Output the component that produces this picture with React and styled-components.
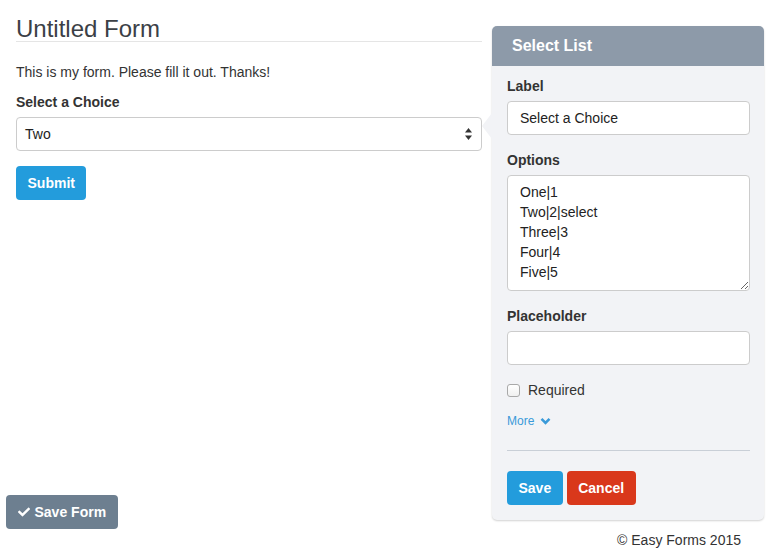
import React from 'react';
import styled, { createGlobalStyle } from 'styled-components';
import { FaCheck } from 'react-icons/fa';

const GlobalStyle = createGlobalStyle`
    body {
        margin: 0;
        background: #fff;
        font-family: "Liberation Sans", Arial, sans-serif;
        font-size: 14px;
        line-height: 20px;
        color: #333;
    }
`;

const Page = styled.div`
    display: flex;
    align-items: flex-start;
    gap: 10px;
    padding: 0 14px 0 16px;
`;

const Left = styled.div`
    width: 466px;
    flex-shrink: 0;
`;

const Title = styled.h1`
    margin: 16px 0 0;
    font-size: 24px;
    font-weight: 400;
    line-height: 25px;
    color: #3b4046;
    border-bottom: 1px solid #e5e5e5;
`;

const Intro = styled.p`
    margin: 20px 0 0;
`;

const FieldLabel = styled.div`
    margin-top: ${props => props.first ? '10px' : '15px'};
    margin-bottom: 5px;
    font-weight: 700;
`;

const SelectBox = styled.div`
    height: 34px;
    box-sizing: border-box;
    border: 1px solid #ccc;
    border-radius: 4px;
    background: #fff;
    display: flex;
    align-items: center;
    justify-content: space-between;
    padding: 0 8px 0 8px;
    color: #222;
`;

const Button = styled.button`
    height: 34px;
    padding: 0 11.5px;
    border: none;
    border-radius: 4px;
    font-family: inherit;
    font-size: 14px;
    font-weight: 700;
    color: #fff;
    background: ${props => props.variant === 'danger' ? '#d9381b' : props.variant === 'muted' ? '#6d7f90' : '#239cdc'};
    display: inline-flex;
    align-items: center;
    gap: 5px;
`;

const SubmitRow = styled.div`
    margin-top: 15px;
`;

const Side = styled.div`
    width: 272px;
    flex-shrink: 0;
    margin-top: 26px;
`;

const Panel = styled.div`
    position: relative;
    background: #f2f3f6;
    border-radius: 5px;
    box-shadow: 0 1px 2px rgba(0, 0, 0, 0.18);
`;

const Pointer = styled.div`
    position: absolute;
    left: -10px;
    top: 87px;
    width: 0;
    height: 0;
    border-top: 13px solid transparent;
    border-bottom: 13px solid transparent;
    border-right: 10px solid #f2f3f6;
`;

const PanelHeader = styled.div`
    height: 40px;
    background: #8d9aa9;
    border-radius: 5px 5px 0 0;
    color: #fff;
    font-size: 16px;
    font-weight: 700;
    display: flex;
    align-items: center;
    padding-left: 20px;
`;

const PanelBody = styled.div`
    padding: 0 14px 15px 15px;
`;

const Input = styled.div`
    height: 34px;
    box-sizing: border-box;
    border: 1px solid #ccc;
    border-radius: 4px;
    background: #fff;
    padding: 0 12px;
    display: flex;
    align-items: center;
    color: #222;
`;

const TextArea = styled.textarea`
    display: block;
    width: 100%;
    height: 116px;
    box-sizing: border-box;
    border: 1px solid #ccc;
    border-radius: 4px;
    background: #fff;
    padding: 6px 12px;
    font-family: inherit;
    font-size: 14px;
    line-height: 20px;
    color: #222;
    resize: vertical;
    outline: none;
`;

const CheckRow = styled.label`
    margin-top: 15px;
    display: flex;
    align-items: center;
    gap: 8px;
`;

const CheckBox = styled.span`
    width: 11px;
    height: 11px;
    border: 1px solid #a9a9a9;
    border-radius: 3px;
    background: linear-gradient(#fff, #f0f0f0);
`;

const MoreLink = styled.a`
    margin-top: 11px;
    display: inline-flex;
    align-items: center;
    gap: 6px;
    font-size: 12px;
    color: #3a9ad9;
    text-decoration: none;
`;

const Divider = styled.hr`
    margin: 19px 0 20px;
    border: none;
    border-top: 1px solid #c9cfd7;
`;

const Actions = styled.div`
    display: flex;
    gap: 4px;
`;

const Footer = styled.div`
    margin-top: 10px;
    text-align: right;
    padding-right: 23px;
`;

const FloatingSave = styled.div`
    position: fixed;
    left: 6px;
    top: 495px;
`;

function UpDown() {
    return (
        <svg width="9" height="14" viewBox="0 0 9 14">
            <path d="M4.5 1 L8 5.5 H1 Z" fill="#333" />
            <path d="M4.5 13 L8 8.5 H1 Z" fill="#333" />
        </svg>
    );
}

function Chevron() {
    return (
        <svg width="11" height="8" viewBox="0 0 11 8">
            <path d="M1.5 1.8 L5.5 5.8 L9.5 1.8" fill="none" stroke="#3a9ad9" strokeWidth="2.6" />
        </svg>
    );
}

export default function App() {
    return (
        <>
            <GlobalStyle />
            <Page>
                <Left>
                    <Title>Untitled Form</Title>
                    <Intro>This is my form. Please fill it out. Thanks!</Intro>
                    <FieldLabel first>Select a Choice</FieldLabel>
                    <SelectBox>
                        <span>Two</span>
                        <UpDown />
                    </SelectBox>
                    <SubmitRow>
                        <Button>Submit</Button>
                    </SubmitRow>
                </Left>
                <Side>
                    <Panel>
                        <Pointer />
                        <PanelHeader>Select List</PanelHeader>
                        <PanelBody>
                            <FieldLabel first>Label</FieldLabel>
                            <Input>Select a Choice</Input>
                            <FieldLabel>Options</FieldLabel>
                            <TextArea
                                readOnly
                                value={'One|1\nTwo|2|select\nThree|3\nFour|4\nFive|5'}
                            />
                            <FieldLabel>Placeholder</FieldLabel>
                            <Input />
                            <CheckRow>
                                <CheckBox />
                                <span>Required</span>
                            </CheckRow>
                            <MoreLink href="#">
                                More <Chevron />
                            </MoreLink>
                            <Divider />
                            <Actions>
                                <Button>Save</Button>
                                <Button variant="danger">Cancel</Button>
                            </Actions>
                        </PanelBody>
                    </Panel>
                    <Footer>© Easy Forms 2015</Footer>
                </Side>
            </Page>
            <FloatingSave>
                <Button variant="muted">
                    <FaCheck size={12} /> Save Form
                </Button>
            </FloatingSave>
        </>
    );
}
